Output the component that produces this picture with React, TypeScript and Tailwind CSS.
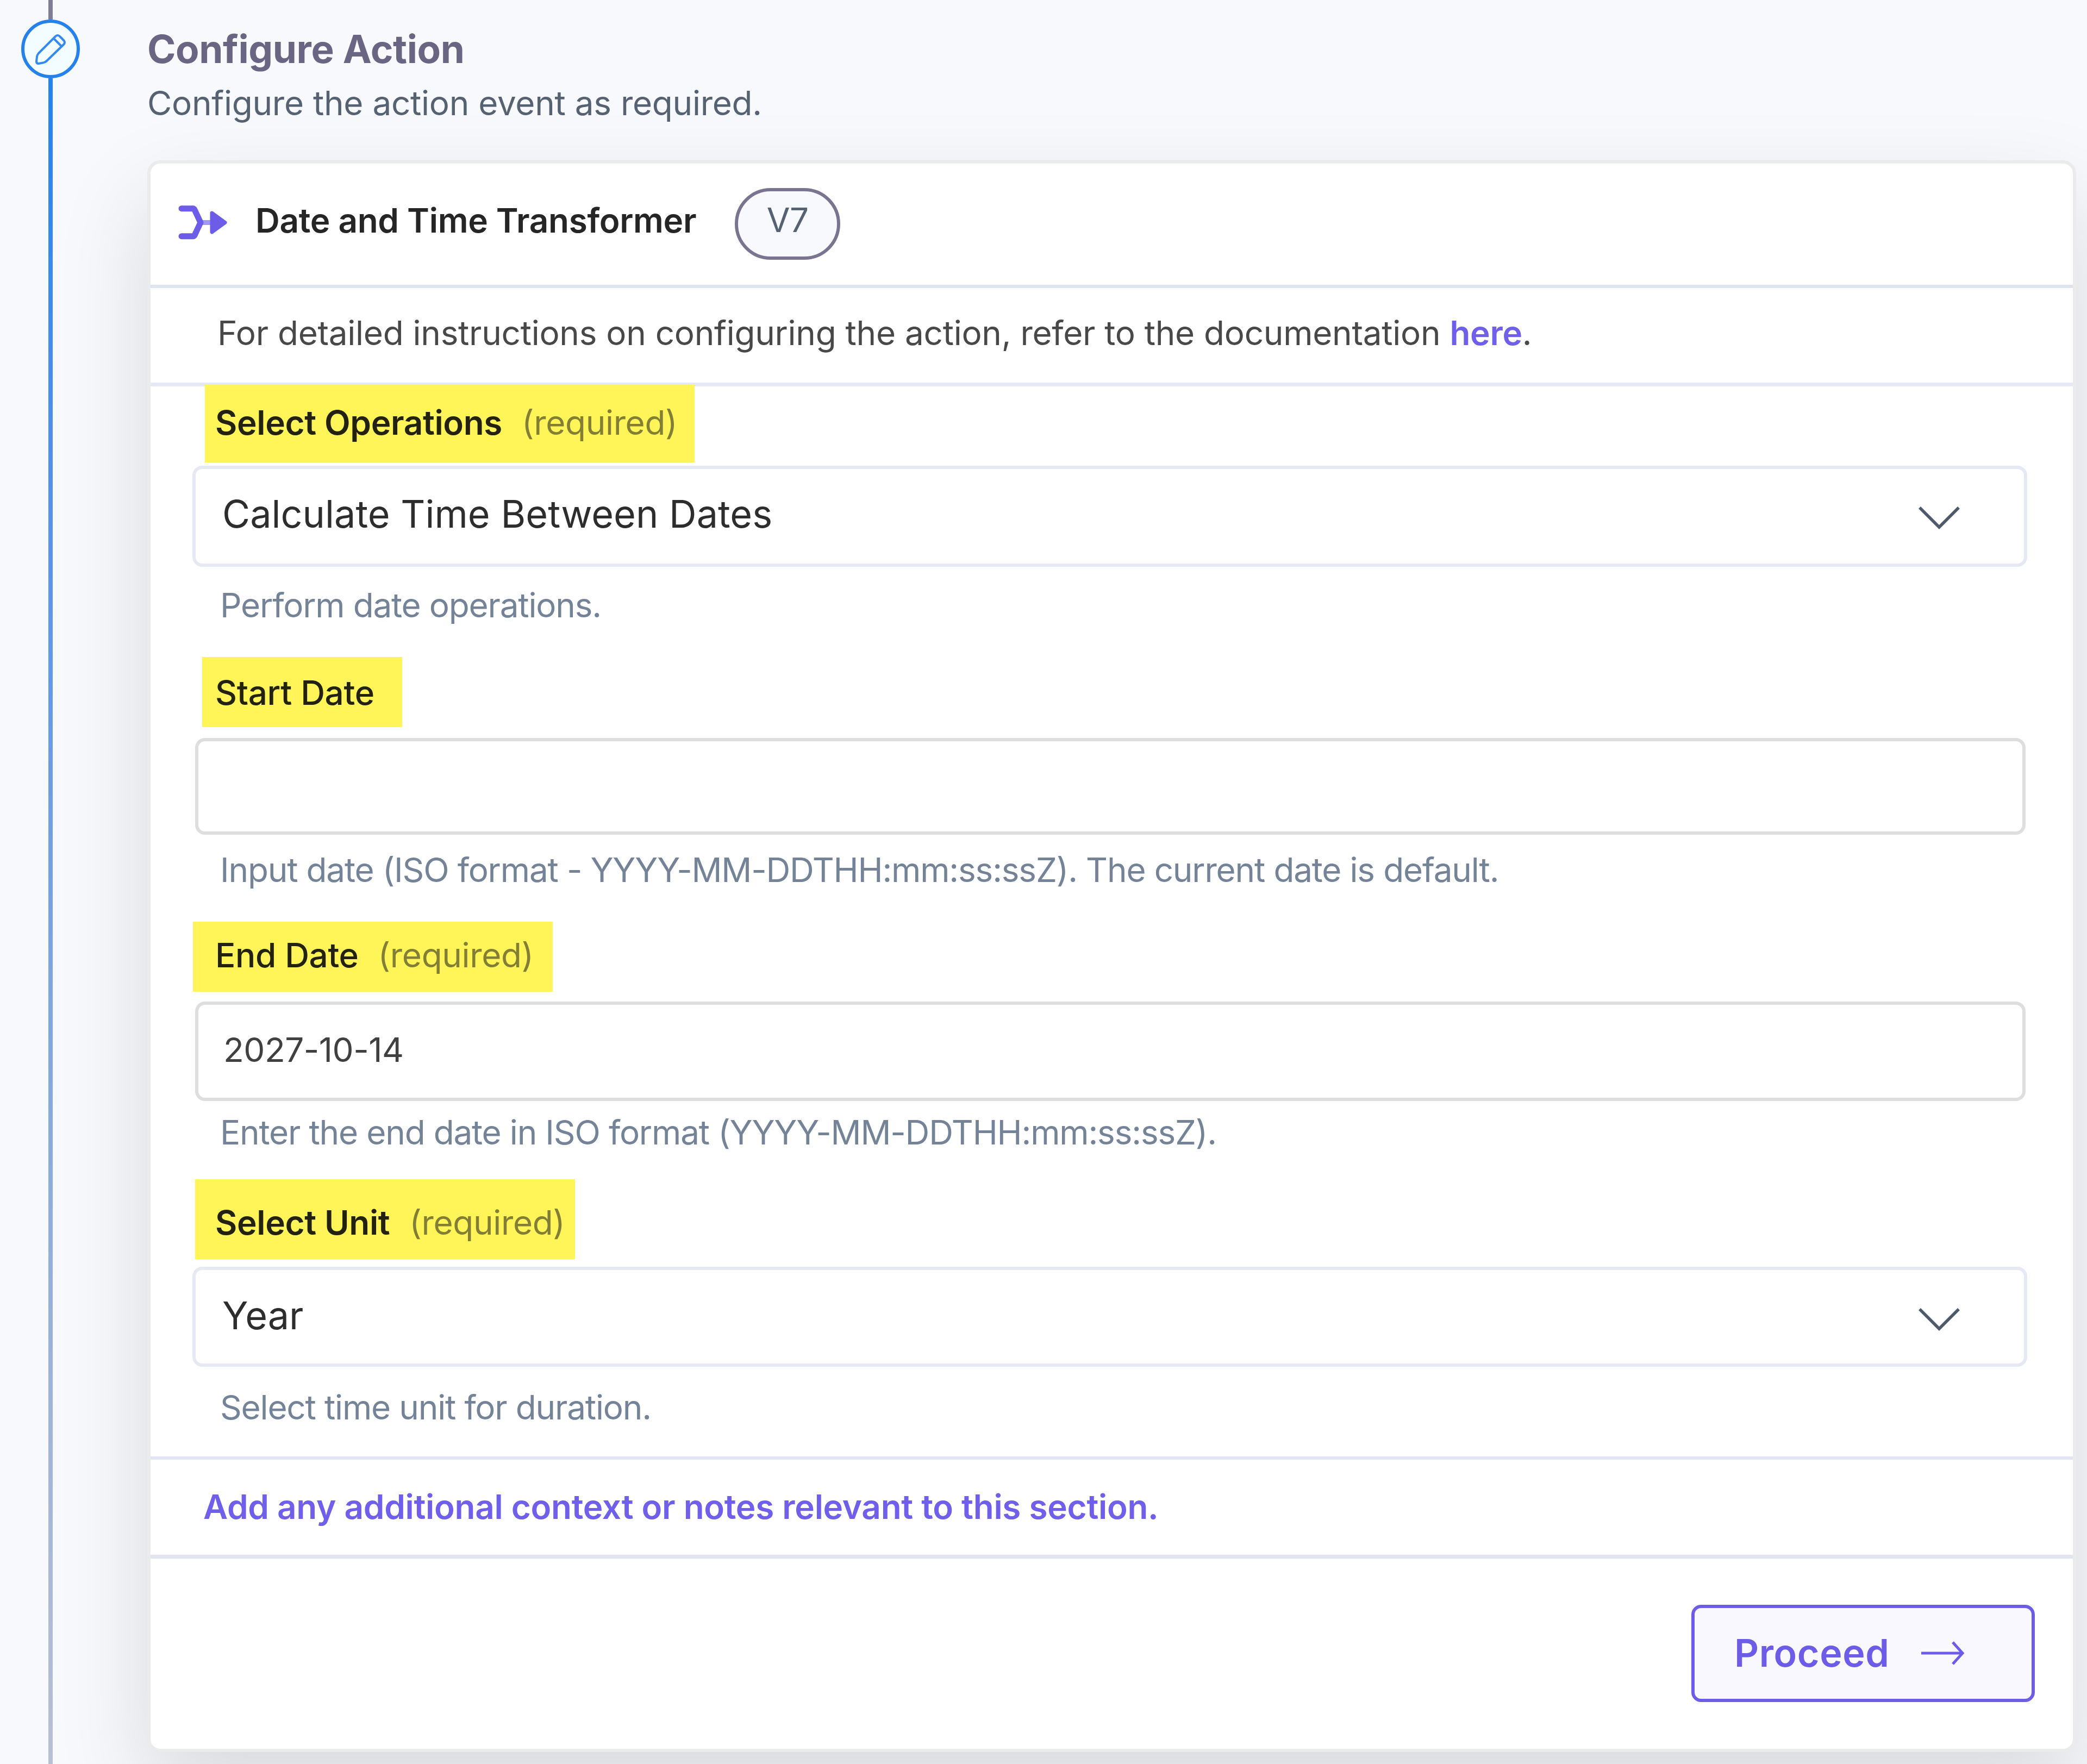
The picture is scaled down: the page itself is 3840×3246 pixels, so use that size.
import type { ReactNode } from "react";

function Label({ children, required, className }: { children: ReactNode; required?: boolean; className: string }) {
  return (
    <div className={`flex shrink-0 items-start bg-[#fff458] text-[62px] leading-[66px] tracking-[-0.35px] text-[#22220f] whitespace-pre ${className}`}>
      <span>{children}</span>
      {required && <span className="ml-[36px] font-normal text-[#827e35]">(required)</span>}
    </div>
  );
}

function Help({ children, className }: { children: ReactNode; className: string }) {
  return (
    <p className={`-mb-px shrink-0 pl-[128px] pt-px text-[62px] leading-[64px] tracking-[-1.18px] text-[#748398] whitespace-pre ${className}`}>
      {children}
    </p>
  );
}

function Select({ value, className }: { value: string; className: string }) {
  return (
    <div className={`ml-[77px] flex w-[3376px] shrink-0 justify-between rounded-[18px] border-[6px] border-[#e5e9f3] bg-white pl-[49px] pr-[116px] ${className}`}>
      <span className="text-[70px] leading-[80px] tracking-[0.05px] text-[#2d2d2d] whitespace-pre">{value}</span>
      <svg className="mt-[22px]" width="80" height="48" viewBox="0 0 80 48" fill="none" stroke="#4e596b" strokeWidth="5.5">
        <path d="M4 6 L40 42 L76 6" />
      </svg>
    </div>
  );
}

export default function App() {
  return (
    <div className="flex h-[3246px] w-[3840px] overflow-hidden bg-[#f8f9fd] font-['Inter',sans-serif]">
      <aside className="flex w-[271px] shrink-0 flex-col pl-[39px]">
        <div className="flex w-[108px] grow flex-col items-center">
          <div className="h-[36px] w-[8px] bg-[#827d96]" />
          <div className="flex size-[108px] shrink-0 items-center justify-center rounded-full border-[6px] border-[#2582ec] bg-[#f3fdff]">
            <svg width="60" height="60" viewBox="0 0 60 60" fill="none" stroke="#3389ee" strokeWidth="4" strokeLinejoin="round">
              <path d="M39 7 Q43 3 47 7 L54 14 Q58 18 54 22 L23 52 Q20 55 16 55.5 L8 57 Q4 57 4 53 L5 44 Q5.5 41 8 38 Z M36 11 L50 25" />
            </svg>
          </div>
          <div className="w-[8px] grow bg-linear-to-b from-[#2582ec] to-[#b9bfd4]" />
        </div>
      </aside>
      <main className="flex w-[3569px] shrink-0 flex-col">
        <h1 className="mt-[50px] text-[71px] leading-[80px] font-bold tracking-[-0.4px] text-[#6b6584] whitespace-pre">Configure Action</h1>
        <p className="mt-[28px] text-[62px] leading-[64px] tracking-[-0.27px] text-[#566272] whitespace-pre">Configure the action event as required.</p>
        <section className="mt-[73px] flex h-[2929px] w-[3549px] shrink-0 flex-col rounded-[24px] border-[6px] border-[#ebebeb] bg-white shadow-[0_70px_170px_rgba(0,0,0,0.13)]">
          <header className="flex h-[229px] shrink-0 items-start border-b-[6px] border-[#dde4ef] pl-[51px]">
            <svg className="mt-[75px]" width="92" height="68" viewBox="0 0 92 68" fill="none" stroke="#6c5ce7" strokeLinecap="round" strokeLinejoin="round">
              <path d="M42 33.5 H58" stroke="#a196f1" strokeWidth="9" />
              <path d="M6 7.7 H27 Q29 8 30 10 L41 33.5 L30 57 Q29 58.7 27 58.7 H6" strokeWidth="11" />
              <path d="M62 16 L86 33.5 L62 51 Z" fill="#6c5ce7" strokeWidth="7" />
            </svg>
            <h2 className="ml-[50px] mt-[72px] text-[62px] leading-[66px] font-semibold tracking-[-0.3px] text-[#252525] whitespace-pre">Date and Time Transformer</h2>
            <span className="ml-[71px] mt-[45px] flex h-[132px] w-[194px] justify-center rounded-full border-[6px] border-[#7a7490] bg-[#f8f9fd] pt-[21px] text-[62px] leading-[64px] tracking-[-0.3px] text-[#566272]">V7</span>
          </header>
          <p className="h-[181px] shrink-0 border-b-[7px] border-[#e5e9f3] pl-[123px] pt-[50px] text-[62px] leading-[66px] tracking-[-0.28px] text-[#484848] whitespace-pre">
            For detailed instructions on configuring the action, refer to the documentation <a className="font-semibold text-[#6f5fea]">here</a>.
          </p>
          <Label required className="-mt-[3px] ml-[100px] h-[143px] w-[901px] pl-[19px] pt-[37px] font-semibold">Select Operations</Label>
          <Select value="Calculate Time Between Dates" className="mt-[6px] h-[186px] pt-[43px]" />
          <Help className="mt-[38px]">Perform date operations.</Help>
          <Label className="mt-[64px] ml-[95px] h-[129px] w-[368px] pl-[24px] pt-[33px] font-medium">Start Date</Label>
          <div className="ml-[82px] mt-[20px] h-[178px] w-[3368px] shrink-0 rounded-[18px] border-[6px] border-[#dedede]" />
          <Help className="mt-[32px]">Input date (ISO format - YYYY-MM-DDTHH:mm:ss:ssZ). The current date is default.</Help>
          <Label required className="mt-[64px] ml-[78px] h-[129px] w-[662px] pl-[41px] pt-[29px] font-medium">End Date</Label>
          <div className="ml-[82px] mt-[18px] h-[183px] w-[3368px] shrink-0 rounded-[18px] border-[6px] border-[#dedede] pl-[46px] pt-[43px] text-[62px] leading-[80px] tracking-[-0.5px] text-[#404040]">2027-10-14</div>
          <Help className="mt-[25px]">Enter the end date in ISO format (YYYY-MM-DDTHH:mm:ss:ssZ).</Help>
          <Label required className="mt-[55px] ml-[82px] h-[147px] w-[699px] pl-[37px] pt-[47px] font-semibold">Select Unit</Label>
          <Select value="Year" className="mt-[14px] h-[184px] pt-[44px]" />
          <Help className="mt-[42px]">Select time unit for duration.</Help>
          <div className="mt-[59px] h-[188px] shrink-0 border-t-[6px] border-b-[7px] border-[#e0e5f1] pl-[97px] pt-[54px] text-[62px] leading-[66px] font-semibold tracking-[-0.29px] text-[#6f5fea] whitespace-pre">Add any additional context or notes relevant to this section.</div>
          <button className="ml-auto mr-[70px] mt-[85px] flex h-[179px] w-[632px] shrink-0 items-center rounded-[18px] border-[6px] border-[#6c5ce7] bg-[#f9f8fe] pb-[2px] pl-[73px] text-[70px] font-semibold tracking-[0.6px] text-[#6c5ce7]">
            Proceed
            <svg className="ml-[59px]" width="80" height="46" viewBox="0 0 80 46" fill="none" stroke="#6c5ce7" strokeWidth="5">
              <path d="M0 23 H76 M58 3 L76 23 L58 43" />
            </svg>
          </button>
        </section>
      </main>
    </div>
  );
}
